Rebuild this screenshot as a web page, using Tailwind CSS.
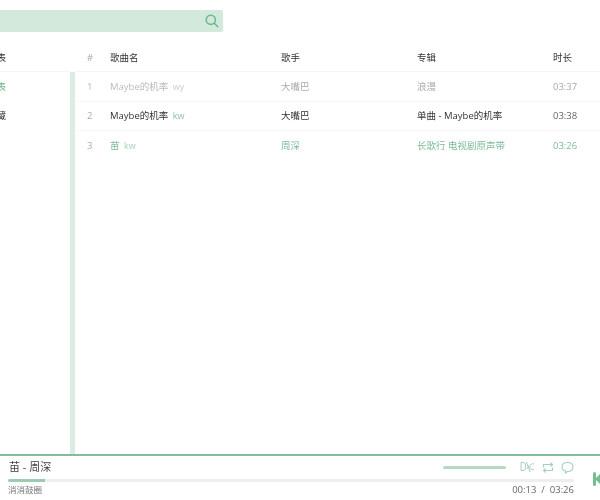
<!DOCTYPE html>
<html>
<head>
<meta charset="utf-8">
<script src="https://cdn.jsdelivr.net/npm/@tailwindcss/browser@4"></script>
</head>
<body class="bg-white overflow-hidden">
<div class="w-[600px] h-[500px] flex flex-col overflow-hidden bg-white text-[9.5px] text-[#333] blur-[0.4px] font-['Open_Sans','Noto_Sans_CJK_SC',sans-serif]">
  <div class="h-[43px] shrink-0 pt-[10px]">
    <div class="w-[223px] h-[22px] bg-[#d2e9db] rounded-r-[2px] flex items-center justify-end pr-[4px]">
      <svg class="w-[14px] h-[14px] text-[#6fb58c]" viewBox="0 0 14 14" fill="none" stroke="currentColor" stroke-width="1.5" stroke-linecap="round"><circle cx="5.800" cy="5.800" r="4.600"/><path d="M9.300 9.300 L12.800 12.800"/></svg>
    </div>
  </div>
  <div class="flex-1 flex min-h-0">
    <div class="w-[70px] shrink-0 overflow-hidden flex flex-col items-end">
      <div class="w-[70px] h-[29px] pt-[2px] border-b border-[#f3f6f4] flex items-center justify-end pr-[64px] whitespace-nowrap">列表</div>
      <div class="h-[29px] pt-[2px] pr-[64px] flex items-center whitespace-nowrap text-[#6fb58c]">列表</div>
      <div class="h-[29px] pt-[2px] pr-[64px] flex items-center whitespace-nowrap">收藏</div>
    </div>
    <div class="w-[5px] shrink-0 mt-[29px] bg-[#dcece3]"></div>
    <div class="flex-1 flex flex-col min-w-0">
      <div class="h-[29px] pt-[2px] flex items-center border-b border-[#f3f6f4] shrink-0">
        <div class="w-[35px] pl-[12px] text-[#aaa]">#</div>
        <div class="w-[171px]">歌曲名</div>
        <div class="w-[136px]">歌手</div>
        <div class="w-[136px]">专辑</div>
        <div>时长</div>
      </div>
      <div class="h-[29.5px] pt-[2px] flex items-center border-b border-[#f5f8f6] text-[#bbb] shrink-0">
        <div class="w-[35px] pl-[12px]">1</div>
        <div class="w-[171px]">Maybe的机率 <span class="text-[9px] text-[#ccc] ml-[2px]">wy</span></div>
        <div class="w-[136px] text-[#aaa]">大嘴巴</div>
        <div class="w-[136px] text-[#aaa]">浪漫</div>
        <div class="text-[#aaa]">03:37</div>
      </div>
      <div class="h-[29px] pt-[2px] flex items-center border-b border-[#f5f8f6] shrink-0">
        <div class="w-[35px] pl-[12px] text-[#aaa]">2</div>
        <div class="w-[171px]">Maybe的机率 <span class="text-[9px] text-[#8cc4a3] ml-[2px]">kw</span></div>
        <div class="w-[136px]">大嘴巴</div>
        <div class="w-[136px]">单曲 - Maybe的机率</div>
        <div class="text-[#666]">03:38</div>
      </div>
      <div class="h-[29px] pt-[2px] flex items-center text-[#7dbb97] shrink-0">
        <div class="w-[35px] pl-[12px] text-[#aaa]">3</div>
        <div class="w-[171px]">苗 <span class="text-[9px] text-[#a5d2b8] ml-[2px]">kw</span></div>
        <div class="w-[136px]">周深</div>
        <div class="w-[136px]">长歌行 电视剧原声带</div>
        <div>03:26</div>
      </div>
    </div>
  </div>
  <div class="h-[46px] shrink-0 border-t-2 border-[#85bb9b] flex relative overflow-hidden">
    <div class="flex-1 pl-[8px] pr-[26px] flex flex-col min-w-0">
      <div class="h-[22px] flex items-center justify-between">
        <div class="text-[11px] text-[#444] pl-[1px] whitespace-pre">苗 - 周深</div>
        <div class="flex items-center">
          <div class="w-[63px] h-[3px] rounded-full bg-[#b5d9c3] mr-[14px]"></div>
          <svg class="w-[15px] h-[14px] mr-[7px] text-[#a5d2b8]" viewBox="0 0 15 14" fill="none" stroke="currentColor" stroke-width="1"><path d="M1 2.500h2a2.500 2.500 0 0 1 2.500 2.500v3a2.500 2.500 0 0 1-2.500 2.500H1z"/><path d="M6.500 2 L10 12 M7 9 L9 5.500"/><path d="M14 4a3 3 0 1 0 0 5.500"/></svg>
          <svg class="w-[12px] h-[13px] mr-[7px] text-[#a5d2b8]" viewBox="0 0 12 13" fill="none" stroke="currentColor" stroke-width="1.100"><path d="M1.500 6.500V3.500h9M8.500 1.500l2 2-2 2M10.500 6.500v3h-9M3.500 11.500l-2-2 2-2"/></svg>
          <svg class="w-[13px] h-[13px] text-[#a5d2b8]" viewBox="0 0 13 13" fill="none" stroke="currentColor" stroke-width="1.100"><path d="M6.500 1.500c3.200 0 5.500 1.800 5.500 4.500s-2.300 4.500-5.500 4.500l-2 1.500.3-1.900C2.500 9.500 1 8 1 6 1 3.300 3.300 1.500 6.500 1.500z"/></svg>
        </div>
      </div>
      <div class="h-[2.500px] bg-[#eeeeee] rounded-full mt-[1px] overflow-hidden">
        <div class="w-[37px] h-full bg-[#9ccbb0]"></div>
      </div>
      <div class="flex-1 flex items-center justify-between -mt-[1px]">
        <div class="text-[8.500px] text-[#777]">消消鼓圈</div>
        <div class="text-[9.500px] text-[#666] whitespace-pre">00:13  /  03:26</div>
      </div>
    </div>
    <div class="absolute left-[593px] top-[16px] flex items-center">
      <div class="w-[3px] h-[14px] bg-[#74bd92] rounded-sm"></div>
      <div class="w-0 h-0 border-y-[6px] border-y-transparent border-r-[6px] border-r-[#74bd92] -ml-[1px]"></div>
    </div>
  </div>
</div>
</body>
</html>
